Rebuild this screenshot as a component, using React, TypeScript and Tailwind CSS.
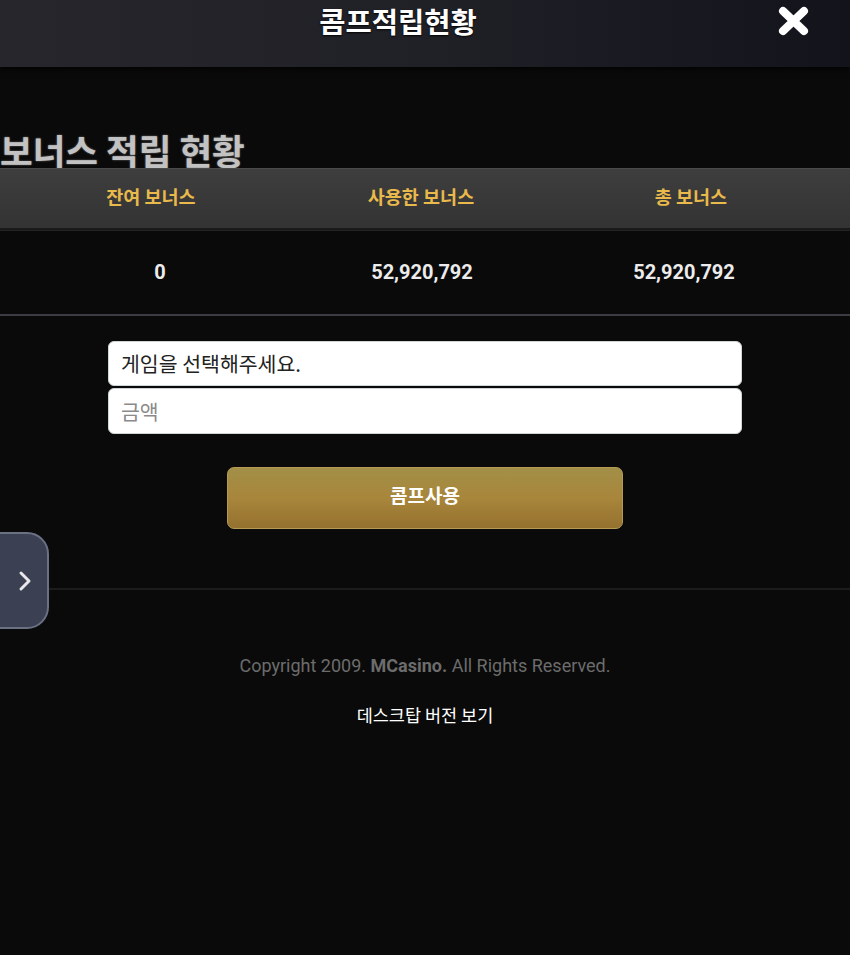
import React from "react";

const kr = { fontFamily: '"Noto Sans CJK KR", "Noto Sans", sans-serif' };
const ro = { fontFamily: 'Roboto, "Noto Sans CJK KR", sans-serif' };

export default function App() {
  return (
    <div className="relative w-[850px] h-[955px] bg-[#0a0a0a] overflow-hidden" style={kr}>
      {/* Header */}
      <div className="relative h-[67px] bg-gradient-to-r from-[#26262c] via-[#202027] to-[#13131b] shadow-[0_2px_6px_rgba(0,0,0,0.8)] flex justify-center pr-[54px]">
        <div className="mt-[1px] text-[28.5px] leading-[40px] font-bold text-white [text-shadow:0_1px_2px_rgba(0,0,0,0.9)]">
          콤프적립현황
        </div>
        <svg className="absolute left-[778px] top-[6px]" width="31" height="30" viewBox="0 0 31 30">
          <path d="M5 5 L26 25 M26 5 L5 25" stroke="#ffffff" strokeWidth="8" strokeLinecap="round" />
        </svg>
      </div>

      {/* Title */}
      <div className="h-[101px] flex items-end">
        <div className="text-[35.5px] leading-[42px] font-bold text-[#c2c2c2] mb-[-3px] [text-shadow:0_0_2px_rgba(255,255,255,0.45)]">
          보너스 적립 현황
        </div>
      </div>

      {/* Table header */}
      <div className="relative h-[62px] bg-gradient-to-b from-[#3e3e3e] to-[#333333] border-t border-[#4a4a4a] border-b-2 border-b-[#1a1a1a]">
        <div className="ml-[16px] grid grid-cols-[270px_270px_270px] h-full items-center text-[18.5px] font-bold text-[#e9b94c] pb-[3px]">
          <div className="text-center">잔여 보너스</div>
          <div className="text-center">사용한 보너스</div>
          <div className="text-center">총 보너스</div>
        </div>
      </div>

      {/* Values */}
      <div className="h-[86px] border-t border-[#232323] border-b-2 border-b-[#3c3c44]">
        <div className="ml-[29px] grid grid-cols-[262px_262px_262px] h-full items-center text-[20px] font-bold text-[#ececec] pb-[2px]" style={ro}>
          <div className="text-center">0</div>
          <div className="text-center">52,920,792</div>
          <div className="text-center">52,920,792</div>
        </div>
      </div>

      {/* Inputs */}
      <div className="mt-[25px] flex flex-col items-center gap-[2px]">
        <div className="w-[634px] h-[45px] bg-white rounded-[6px] border border-[#cfd4d4] flex items-center px-[12px] text-[20.5px] text-[#222]">
          게임을 선택해주세요.
        </div>
        <div className="w-[634px] h-[46px] bg-white rounded-[6px] border border-[#cfd4d4] flex items-center px-[12px] text-[20.5px] text-[#8a8a8a]">
          금액
        </div>
      </div>

      {/* Button */}
      <div className="mt-[33px] flex justify-center">
        <div className="w-[396px] h-[62px] rounded-[7px] bg-gradient-to-b from-[#a28f47] via-[#a8863b] to-[#95712f] border border-[#b49a52] flex items-center justify-center text-[19px] font-bold text-white pb-[5px]">
          콤프사용
        </div>
      </div>

      {/* Divider */}
      <div className="mt-[59px] border-t-2 border-[#1c1c1c]" />

      {/* Footer */}
      <div className="mt-[62px] text-center text-[18px] text-[#6c6c6c]" style={ro}>
        Copyright 2009. <span className="font-bold">MCasino.</span> All Rights Reserved.
      </div>
      <div className="mt-[23px] text-center text-[17.5px] text-white">데스크탑 버전 보기</div>

      {/* Side tab */}
      <div className="absolute left-[-2px] top-[532px] w-[51px] h-[97px] bg-[#3b4052] border-2 border-[#6a7183] rounded-r-[22px] flex items-center justify-center">
        <svg width="16" height="24" viewBox="0 0 16 24" className="ml-[2px]">
          <path d="M4 4 L12 12 L4 20" stroke="#e8e8ec" strokeWidth="3" fill="none" strokeLinecap="round" strokeLinejoin="round" />
        </svg>
      </div>
    </div>
  );
}
